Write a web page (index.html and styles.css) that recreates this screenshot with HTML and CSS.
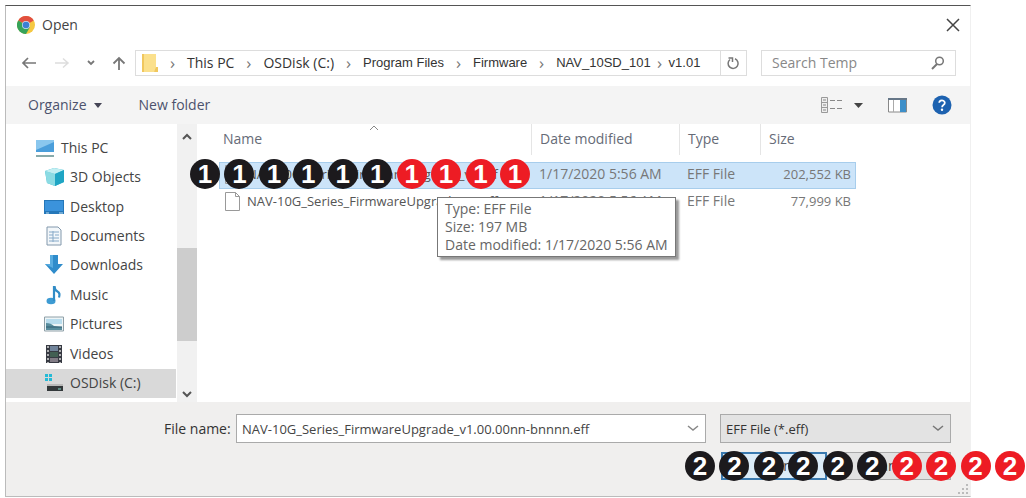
FILE: index.html
```html
<!DOCTYPE html>
<html lang="en">
<head>
<meta charset="utf-8">
<title>Open</title>
<link rel="stylesheet" href="styles.css">
</head>
<body>
<main class="dialog">
  <header class="titlebar">
    <svg class="chrome" viewBox="0 0 18 18"><circle cx="9" cy="9" r="9" fill="#f5c842"/><path d="M9 9 1.2 4.5A9 9 0 0 1 16.8 4.5z" fill="#e2503f"/><path d="M9 9 1.2 4.5A9 9 0 0 0 9 18l4-7z" fill="#36a35a"/><circle cx="9" cy="9" r="4" fill="#cfe0f4"/><circle cx="9" cy="9" r="3.3" fill="#3b7fd4"/></svg>
    <h1 class="title">Open</h1>
    <button class="close" aria-label="Close"><svg width="14" height="14" viewBox="0 0 14 14"><path d="M1 1 13 13M13 1 1 13" stroke="#444" stroke-width="1.5"/></svg></button>
  </header>

  <div class="navrow">
    <div class="arrows">
      <button class="plain" aria-label="Back"><svg width="16" height="14" viewBox="0 0 16 14"><path d="M15 7H2M7 2 2 7l5 5" fill="none" stroke="#777" stroke-width="1.7"/></svg></button>
      <button class="plain" aria-label="Forward"><svg width="16" height="14" viewBox="0 0 16 14"><path d="M1 7h12M9 2.500l5 4.500-5 4.500" fill="none" stroke="#ddd" stroke-width="1.5"/></svg></button>
      <button class="plain" aria-label="Recent"><svg width="8" height="14" viewBox="0 0 8 14"><path d="M1 5l3 3 3-3" fill="none" stroke="#777" stroke-width="1.8"/></svg></button>
      <button class="plain" aria-label="Up"><svg width="14" height="14" viewBox="0 0 14 14"><path d="M7 14V2M1.500 7.500 7 2l5.500 5.500" fill="none" stroke="#777" stroke-width="1.8"/></svg></button>
    </div>
    <nav class="path" aria-label="Path">
      <svg class="folder" width="17" height="20" viewBox="0 0 17 20"><path d="M1 1h14v17l-2 1H1z" fill="#fbe08c"/><path d="M1 1h2v18H1zM15 14h2v5h-4z" fill="#f0c75e"/></svg>
      <span class="sep">›</span><a class="crumb">This PC</a>
      <span class="sep">›</span><a class="crumb">OSDisk (C:)</a>
      <span class="sep">›</span><a class="crumb alt">Program Files</a>
      <span class="sep">›</span><a class="crumb alt">Firmware</a>
      <span class="sep">›</span><a class="crumb alt">NAV_10SD_101</a>
      <span class="sep tight">›</span><a class="crumb alt">v1.01</a>
      <button class="refresh" aria-label="Refresh"><svg width="13" height="14" viewBox="0 0 13 14"><path d="M8 2.800A5 5 0 1 1 3 3.500M1.500 2h4v4" fill="none" stroke="#777" stroke-width="1.5"/></svg></button>
    </nav>
    <label class="search">
      <input type="text" placeholder="Search Temp" aria-label="Search Temp">
      <svg width="14" height="14" viewBox="0 0 14 14"><circle cx="8.500" cy="5" r="3.800" fill="none" stroke="#777" stroke-width="1.5"/><path d="M6 8 1 13" stroke="#777" stroke-width="2"/></svg>
    </label>
  </div>

  <div class="toolbar">
    <button class="plain cmd">Organize <svg width="8" height="5" viewBox="0 0 8 5"><path d="M0 0h8L4 5z" fill="#445"/></svg></button>
    <button class="plain cmd">New folder</button>
    <div class="views">
      <button class="plain view" aria-label="View"><svg width="22" height="16" viewBox="0 0 22 16"><path d="M.5.5h6v15h-6zM.5 5.500h6M.5 10.500h6" fill="#eee" stroke="#999"/><path d="M2 3h3M2 8h3M2 13h3" stroke="#888"/><path d="M9 3.500h12M9 11.500h12" stroke="#888" stroke-dasharray="5 2"/></svg>
      <svg width="9" height="5" viewBox="0 0 9 5"><path d="M0 0h9L4.500 5z" fill="#444"/></svg></button>
      <button class="plain" aria-label="Preview pane"><svg width="19" height="15" viewBox="0 0 19 15"><path d="M.5 1h18v13H.5z" fill="#fff" stroke="#888"/><path d="M0 1h19" stroke="#678" stroke-width="2"/><path d="M5.500 2v12" stroke="#aaa"/><path d="M12 2h6v12h-6z" fill="#3d8fc9"/></svg></button>
      <button class="plain" aria-label="Help"><svg width="20" height="20" viewBox="0 0 20 20"><circle cx="10" cy="10" r="9.500" fill="#1d62b0"/><path d="M7.200 7.800a2.800 2.500 0 1 1 4.200 2.200q-1.300.8-1.300 2.200" fill="none" stroke="#fff" stroke-width="1.800"/><circle cx="10" cy="14.700" r="1.200" fill="#fff"/></svg></button>
    </div>
  </div>

  <div class="content">
    <ul class="tree">
      <li class="root"><svg viewBox="0 0 20 20"><path d="M1 2h18v12H1z" fill="#4a9edb"/><path d="M1 2h18v2L1 12z" fill="#8ac7ee"/><path d="M1 18h18" stroke="#8aa" stroke-width="2"/></svg>This PC</li>
      <li><svg viewBox="0 0 20 20"><path d="m1 4 9-3 10 2v12l-9 4-8-3z" fill="#35b8cf"/><path d="m1 4 10 3v12l-8-3z" fill="#8bdbe3"/><path d="m1 4 9-3 10 2-9 4z" fill="#c3eff2"/><path d="m11 7 9-4v12l-9 4z" fill="#1fa5c4"/></svg>3D Objects</li>
      <li><svg viewBox="0 0 20 20"><path d="M0 3h20v14H0z" fill="#2577b9"/><path d="M1 4h18v10H1z" fill="#3b93dc"/><path d="M2 16h3M15 16h4" stroke="#bde"/></svg>Desktop</li>
      <li><svg viewBox="0 0 20 20"><path d="M3 1h11l3 3v15H3z" fill="#f3f7fa" stroke="#8298ac"/><path d="M5 6h10M5 9h4M5 12h10M5 15h10M11 9h4M9 5v11" stroke="#86a9c8"/></svg>Documents</li>
      <li><svg viewBox="0 0 20 20"><path d="M6 0h8v9h5l-9 10-9-10h5z" fill="#2f8ccb"/><path d="M6 0h3v13L1 9h5z" fill="#58ace0"/></svg>Downloads</li>
      <li><svg viewBox="0 0 20 20"><ellipse cx="7" cy="16" rx="4.500" ry="3.200" fill="#3d9bd3"/><path d="M10 1v15M10.500 1q0 4 3 5.500t1.500 6" fill="none" stroke="#318cc6" stroke-width="2.200"/></svg>Music</li>
      <li><svg viewBox="0 0 20 20"><path d="M.5 3h19v14H.5z" fill="#edf4f6" stroke="#8fa0a8"/><path d="M2 5h16v5H2z" fill="#b8dced"/><path d="M2 9q5 0 8 3l8 1v3H2z" fill="#588d9d"/><path d="M2 13h16" stroke="#315c72"/></svg>Pictures</li>
      <li><svg viewBox="0 0 20 20"><path d="M2 1h16v18H2z" fill="#373a43"/><path d="M6 2h8v5H6z" fill="#71849b"/><path d="M6 8h8v5H6z" fill="#425f53"/><path d="M6 14h8v4H6z" fill="#817b85"/><path d="M4 2v17M16 2v17" stroke="#d8d8d8" stroke-width="1.500" stroke-dasharray="2 2"/></svg>Videos</li>
      <li class="selected"><svg viewBox="0 0 20 20"><path d="M1 1h3v3H1zM5 1h3v3H5zM1 5h3v3H1zM5 5h3v3H5z" fill="#25bad6"/><path d="M3 13h16v5H3z" fill="#33383a"/><path d="M3 12h16" stroke="#999"/><path d="M14 16h3" stroke="#8dc"/></svg>OSDisk (C:)</li>
    </ul>
    <div class="scrollbar">
      <svg width="10" height="7" viewBox="0 0 10 7"><path d="m1 6 4-4 4 4" fill="none" stroke="#555" stroke-width="2"/></svg>
      <div class="track"><div class="thumb"></div></div>
      <svg width="10" height="7" viewBox="0 0 10 7"><path d="m1 1 4 4 4-4" fill="none" stroke="#555" stroke-width="2"/></svg>
    </div>
    <section class="files">
      <table>
        <colgroup><col class="c-name"><col class="c-date"><col class="c-type"><col class="c-size"></colgroup>
        <thead><tr>
          <th><div class="head">Name<svg class="sort" width="10" height="5" viewBox="0 0 10 5"><path d="m1 5 4-4 4 4" fill="none" stroke="#888"/></svg></div></th>
          <th><div class="head">Date modified</div></th><th><div class="head">Type</div></th><th><div class="head last">Size</div></th>
        </tr></thead>
        <tbody>
          <tr class="picked"><td><div class="file"><svg width="15" height="19" viewBox="0 0 15 19"><path d="M.5.5h10l4 4v14H.5zM10.500.5v4h4" fill="#fff" stroke="#999"/></svg>NAV-10G_Series_FirmwareUpgrade_v1.eff</div></td><td>1/17/2020 5:56 AM</td><td>EFF File</td><td class="num">202,552 KB</td></tr>
          <tr><td><div class="file"><svg width="15" height="19" viewBox="0 0 15 19"><path d="M.5.5h10l4 4v14H.5zM10.500.5v4h4" fill="#fff" stroke="#999"/></svg>NAV-10G_Series_FirmwareUpgrade_v1.eff</div></td><td>1/17/2020 5:56 AM</td><td>EFF File</td><td class="num">77,999 KB</td></tr>
        </tbody>
      </table>
      <div class="tooltip" role="tooltip">Type: EFF File<br>Size: 197 MB<br>Date modified: 1/17/2020 5:56 AM</div>
      <div class="badges step-one"><b>1</b><b>1</b><b>1</b><b>1</b><b>1</b><b>1</b><b class="red">1</b><b class="red">1</b><b class="red">1</b><b class="red">1</b></div>
    </section>
  </div>

  <footer class="footer">
    <div class="fields">
      <label class="name-label" for="filename">File name:</label>
      <div class="combo"><input id="filename" type="text" value="NAV-10G_Series_FirmwareUpgrade_v1.00.00nn-bnnnn.eff"><svg width="12" height="7" viewBox="0 0 12 7"><path d="m1 1 5 4 5-4" fill="none" stroke="#888" stroke-width="1.500"/></svg></div>
      <div class="combo filter"><select aria-label="File type"><option>EFF File (*.eff)</option></select><svg width="12" height="7" viewBox="0 0 12 7"><path d="m1 1 5 4 5-4" fill="none" stroke="#777" stroke-width="1.500"/></svg></div>
    </div>
    <div class="actions"><button class="action primary">Open</button><button class="action">Cancel</button></div>
    <svg class="grip" width="12" height="12" viewBox="0 0 12 12"><path d="M9 0h2v2H9zM9 4h2v2H9zM9 8h2v2H9zM5 4h2v2H5zM5 8h2v2H5zM1 8h2v2H1z" fill="#bbb"/></svg>
    <div class="badges step-two"><b>2</b><b>2</b><b>2</b><b>2</b><b>2</b><b>2</b><b class="red">2</b><b class="red">2</b><b class="red">2</b><b class="red">2</b></div>
  </footer>
</main>
</body>
</html>
```

FILE: styles.css
```css
* { box-sizing: border-box; }
body {
  margin: 0;
  background: #fff;
  color: #444;
  font: 14px/18px "Open Sans", "Noto Sans", sans-serif;
}
button, input, select { font: inherit; color: inherit; }
.plain, .close, .refresh { border: 0; background: none; padding: 0; display: flex; align-items: center; }

.dialog {
  display: flex;
  flex-direction: column;
  min-height: calc(100vh - 6px);
  margin: 5px 55px 1px 5px;
  border: 1px solid #bbb;
  border-top: 1px solid #555;
  border-right-color: #f0f0f0;
}

.titlebar { display: flex; align-items: center; height: 38px; padding: 0 10px 0 11px; }
.chrome { width: 18px; height: 18px; }
.title { margin: 0 auto 0 7px; font-size: 14px; font-weight: 400; }

.navrow { display: flex; height: 42px; padding: 6px 14px 10px 15px; }
.arrows { display: flex; align-items: center; justify-content: space-between; width: 105px; margin-right: 9px; }
.path {
  display: flex;
  align-items: center;
  flex: 1;
  padding-left: 5px;
  border: 1px solid #ddd;
  white-space: nowrap;
}
.sep { width: 29px; text-align: center; color: #777; font-size: 17px; }
.tight { width: 18px; }
.crumb { color: #333; }
.alt { font-family: "Liberation Sans", Arial, sans-serif; font-size: 13px; }
.refresh { align-self: stretch; justify-content: center; width: 26px; margin-left: auto; border-left: 1px solid #ddd; }
.search { display: flex; align-items: center; width: 195px; margin-left: 14px; padding: 0 10px; border: 1px solid #ddd; }
.search input { flex: 1; min-width: 0; border: 0; padding: 0; background: none; outline: 0; }
.search input::placeholder { color: #888; opacity: 1; }

.toolbar { display: flex; align-items: center; gap: 37px; height: 38px; padding: 0 18px 0 22px; background: #f4f4f4; color: #4c526d; }
.cmd { gap: 7px; }
.views { display: flex; align-items: center; gap: 25px; margin-left: auto; }
.view { gap: 11px; }

.content { display: flex; flex: 1; min-height: 260px; }
.tree { display: flex; flex-direction: column; width: 170px; margin: 0; padding: 9px 0 4px; list-style: none; }
.tree li { display: flex; flex: 1; align-items: center; gap: 6px; padding-left: 38px; }
.tree .root { padding-left: 29px; }
.tree svg { width: 20px; height: 20px; }
.tree .selected { background: #d9d9d9; }
.scrollbar { display: flex; flex-direction: column; align-items: center; width: 20px; margin-left: 1px; padding: 9px 0 4px; background: #f1f1f1; }
.track { display: flex; flex: 1; align-self: stretch; flex-direction: column; justify-content: flex-end; padding-bottom: 50px; }
.thumb { height: 93px; background: #cdcdcd; }

.files { position: relative; flex: 1; padding-left: 22px; }
table { border-collapse: collapse; table-layout: fixed; width: 637px; color: #777; }
.c-name { width: 313px; }
.c-date { width: 148px; }
.c-type { width: 81px; }
.c-size { width: 95px; }
th { padding: 0 0 7px; font-weight: 400; text-align: left; color: #666b77; }
.head { position: relative; height: 31px; padding: 6px 8px 0; border-right: 1px solid #e5e5e5; }
th:first-child .head { padding-left: 4px; }
.last { border: 0; }
.sort { position: absolute; left: 150px; top: 1px; }
td { height: 27px; padding: 0 7px 3px; white-space: nowrap; }
td:first-child { padding: 0 6px 3px; }
td.num { text-align: right; padding-right: 5px; font-size: 13px; }
.file { display: flex; align-items: center; gap: 7px; overflow: hidden; color: #555; font-size: 13px; }
.picked { background: #cce4f9; outline: 1px solid #a7cdec; outline-offset: -1px; }

.tooltip {
  position: absolute;
  left: 240px;
  top: 73px;
  padding: 2px 7px;
  border: 1px solid #777;
  background: #fff;
  box-shadow: 3px 3px 2px #999;
  color: #666;
  white-space: nowrap;
}

.badges { position: absolute; display: flex; justify-content: space-between; width: 340px; }
.badges b {
  width: 30px;
  height: 30px;
  border-radius: 50%;
  background: #1c1a1d;
  color: #fff;
  font: bold 26px/30px "Liberation Sans", Arial, sans-serif;
  text-align: center;
}
.badges .red { background: #ed1c24; }
.step-one { left: -7px; top: 35px; }
.step-two { right: -55px; bottom: 15px; }

.footer { position: relative; height: 94px; padding: 12px 19px 0 158px; background: #f0efee; }
.fields { display: flex; align-items: center; height: 29px; }
.name-label { width: 72px; color: #333; }
.combo { display: flex; align-items: center; position: relative; flex: 1; height: 29px; border: 1px solid #aaa; background: #fff; font-size: 13px; }
.combo svg { position: absolute; right: 6px; pointer-events: none; }
.combo input, .combo select { width: 100%; height: 100%; padding: 0 5px; border: 0; background: none; outline: 0; appearance: none; }
.filter { flex: 0 0 231px; margin-left: 14px; background: #e3e3e3; color: #333; }
.actions { display: flex; justify-content: flex-end; gap: 8px; margin-top: 9px; }
.action { width: 116px; height: 28px; padding: 0; border: 1px solid #aaa; background: #e2e2e2; }
.primary { width: 106px; border: 2px solid #3a7ab0; background: #dcecf8; }
.grip { position: absolute; right: 1px; bottom: 0; }
```
